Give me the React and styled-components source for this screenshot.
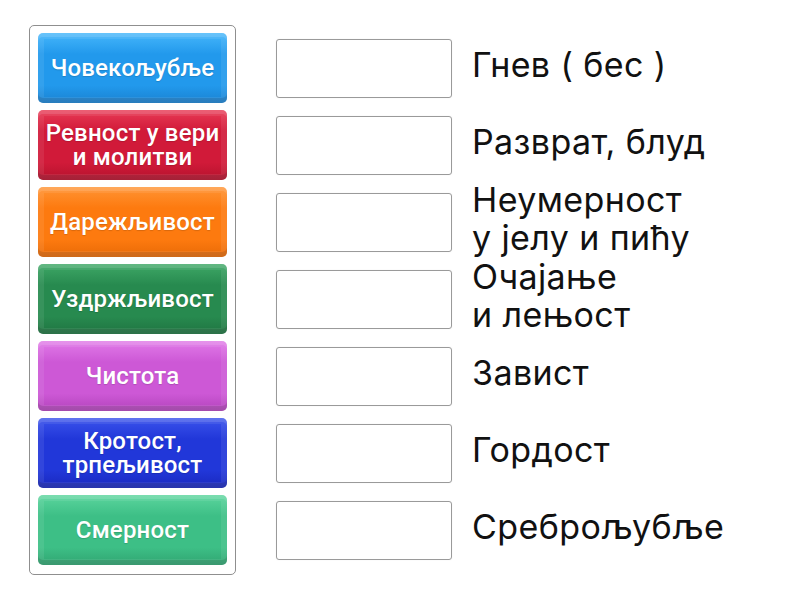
import React from 'react';
import styled, { createGlobalStyle } from 'styled-components';

const GlobalStyle = createGlobalStyle`
  html, body {
    margin: 0;
    padding: 0;
    background: #fff;
  }
  body {
    font-family: Roboto, "Liberation Sans", Arial, sans-serif;
  }
`;

const Page = styled.div`
  display: flex;
  align-items: flex-start;
  padding: 25px 0 0 29px;
`;

const TilePanel = styled.div`
  width: 189px;
  padding: 7px 8px 9px 8px;
  border: 1px solid #8f8f8f;
  border-radius: 5px;
  display: flex;
  flex-direction: column;
  gap: 7px;
`;

const Tile = styled.div`
  height: 70px;
  border-radius: 5px;
  display: flex;
  align-items: center;
  justify-content: center;
  text-align: center;
  padding: 0 3px;
  box-sizing: border-box;
  color: #fff;
  font-family: Roboto, "Liberation Sans", Arial, sans-serif;
  font-size: 24px;
  line-height: 24px;
  font-weight: 500;
  letter-spacing: 0.2px;
  text-shadow: 0 1px 1px rgba(0, 0, 0, 0.15);
  background: linear-gradient(to bottom, ${p => p.$light}, ${p => p.$base} 30%, ${p => p.$base} 75%, ${p => p.$dark});
  box-shadow:
    inset 0 0 0 6px rgba(255, 255, 255, 0.08),
    inset 0 -5px 0 rgba(0, 0, 0, 0.12),
    inset 0 4px 0 rgba(255, 255, 255, 0.12);
`;

const Targets = styled.div`
  margin: 8px 0 0 40px;
  display: flex;
  flex-direction: column;
  gap: 7px;
`;

const Row = styled.div`
  height: 70px;
  display: flex;
  align-items: center;
  gap: 20px;
`;

const DropBox = styled.div`
  flex: none;
  width: 176px;
  height: 59px;
  box-sizing: border-box;
  border: 1px solid #9a9a9a;
  border-radius: 3px;
  background: #fff;
  box-shadow: 0 0 2px rgba(0, 0, 0, 0.06);
`;

const Label = styled.div`
  font-family: Inter, "Noto Sans", sans-serif;
  font-size: 34px;
  line-height: 38px;
  letter-spacing: 0.4px;
  color: #111;
  white-space: nowrap;
  padding-bottom: 6px;
`;

const tiles = [
  { text: 'Човекољубље', light: '#45b6fb', base: '#2299ec', dark: '#1a82d2' },
  { text: 'Ревност у вери и молитви', light: '#e83a55', base: '#d11a39', dark: '#b5122d' },
  { text: 'Дарежљивост', light: '#ff9434', base: '#fd7a0f', dark: '#e86a06' },
  { text: 'Уздржљивост', light: '#3ea766', base: '#278a4f', dark: '#1f7441' },
  { text: 'Чистота', light: '#e17ae8', base: '#cd58d6', dark: '#b344bc' },
  { text: 'Кротост, трпељивост', light: '#3b53ec', base: '#2137d9', dark: '#1a28bd' },
  { text: 'Смерност', light: '#5bd59d', base: '#3dbf86', dark: '#30a571' },
];

const labels = [
  ['Гнев ( бес )'],
  ['Разврат, блуд'],
  ['Неумерност', 'у јелу и пићу'],
  ['Очајање', 'и лењост'],
  ['Завист'],
  ['Гордост'],
  ['Среброљубље'],
];

export default function App() {
  return (
    <>
      <GlobalStyle />
      <Page>
        <TilePanel>
          {tiles.map(t => (
            <Tile key={t.text} $light={t.light} $base={t.base} $dark={t.dark}>
              {t.text}
            </Tile>
          ))}
        </TilePanel>
        <Targets>
          {labels.map((lines, i) => (
            <Row key={i}>
              <DropBox />
              <Label>
                {lines.map((l, j) => (
                  <div key={j}>{l}</div>
                ))}
              </Label>
            </Row>
          ))}
        </Targets>
      </Page>
    </>
  );
}
